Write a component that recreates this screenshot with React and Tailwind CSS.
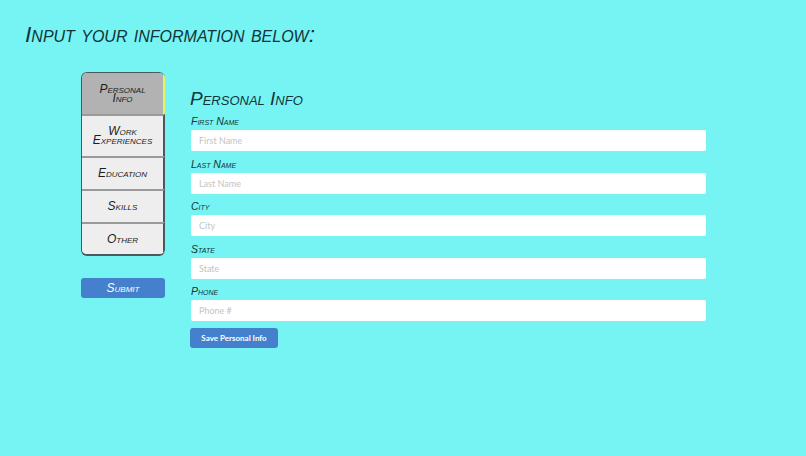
import React from "react";

const hand = "font-['Liberation_Sans',sans-serif] italic [font-variant:small-caps]";

const tabs = [
  { label: "Work Experiences", h: "h-[42px]" },
  { label: "Education", h: "h-[33px]" },
  { label: "Skills", h: "h-[33px]" },
  { label: "Other", h: "h-[32px]" },
];

const fields = [
  { label: "First Name", placeholder: "First Name" },
  { label: "Last Name", placeholder: "Last Name" },
  { label: "City", placeholder: "City" },
  { label: "State", placeholder: "State" },
  { label: "Phone", placeholder: "Phone #" },
];

function SideNav() {
  return (
    <div className="w-[84px] shrink-0">
      <div className="overflow-hidden rounded-[6px] border-b-2 border-l border-t border-[#4a5a5c]">
        <div className="flex h-[41px] items-center justify-center border-r-2 border-[#e8f55a] bg-[#b2b2b2] px-4 text-center text-[12px] leading-[9px] text-[#1c1c1c]">
          Personal Info
        </div>
        {tabs.map((tab) => (
          <div
            key={tab.label}
            className={`flex ${tab.h} items-center justify-center border-r-2 border-t-2 border-r-[#4a5a5c] border-t-[#9a9a9a] bg-[#eeeeee] px-1 text-center text-[12px] leading-[9px] text-[#1c1c1c]`}
          >
            {tab.label}
          </div>
        ))}
      </div>
      <button className="mt-[22px] h-[20px] w-full rounded-[3px] bg-[#4480cc] text-[12px] leading-none text-white">
        Submit
      </button>
    </div>
  );
}

function Field({ label, placeholder }) {
  return (
    <div className="mb-[6.5px]">
      <div className={`${hand} h-[15px] text-[10.5px] leading-[13px] text-[#12343a]`}>{label}</div>
      <input
        type="text"
        placeholder={placeholder}
        className="block h-[21px] w-[515px] rounded-[2px] bg-white px-2 font-['Lato',sans-serif] text-[9px] not-italic outline-none [font-variant:normal] placeholder:text-[#c4c4c4]"
      />
    </div>
  );
}

export default function App() {
  return (
    <div className="h-[456px] w-[806px] overflow-hidden bg-[#76f4f3] text-[#12343a]">
      <h1 className={`${hand} pl-[25px] pt-[23px] text-[22.8px] font-normal leading-[22px]`}>
        Input your information below:
      </h1>
      <div className={`${hand} mt-[27px] flex pl-[81px]`}>
        <SideNav />
        <div className="ml-[26px] pt-[15px]">
          <h2 className="-ml-px mb-[4px] text-[19px] font-normal leading-[24px]">Personal Info</h2>
          {fields.map((field) => (
            <Field key={field.label} {...field} />
          ))}
          <button className="-ml-px mt-[2px] block h-[20px] w-[88px] rounded-[3px] bg-[#4480cc] font-['Lato',sans-serif] text-[8px] font-bold not-italic text-white [font-variant:normal]">
            Save Personal Info
          </button>
        </div>
      </div>
    </div>
  );
}
